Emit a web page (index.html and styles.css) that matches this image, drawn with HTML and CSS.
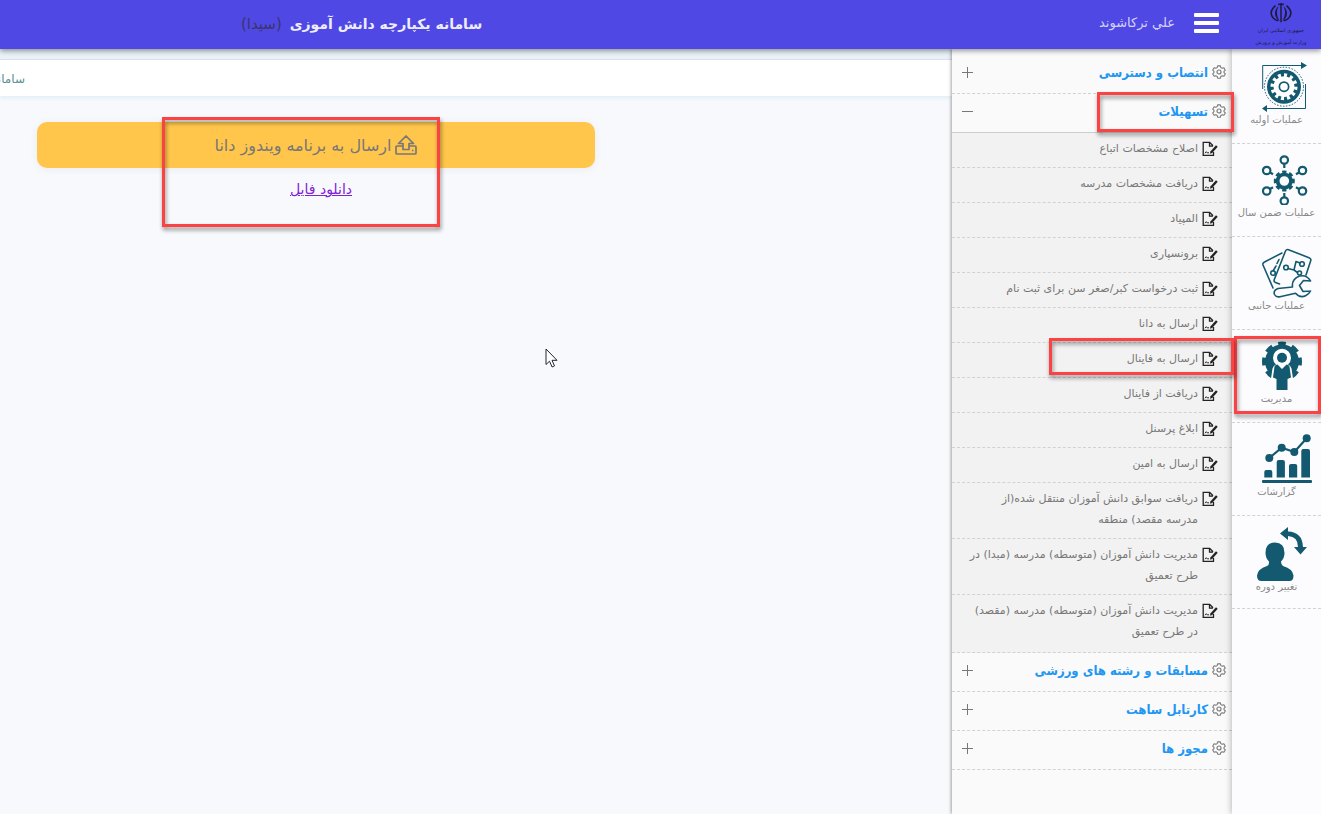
FILE: index.html
```html
<!DOCTYPE html>
<html lang="fa" dir="rtl">

<head>
    <meta charset="UTF-8">
    <meta name="viewport" content="width=device-width, initial-scale=1.0">
    <title>سامانه یکپارچه دانش آموزی</title>
    <link rel="stylesheet" href="styles.css">
</head>

<body>

    <svg class="sprite" aria-hidden="true">
        <symbol id="gear" viewBox="0 0 16 16">
            <path d="M6.4 1h3.2l.5 2 1.5.8 2-.6 1.6 2.7-1.5 1.5v1.3l1.5 1.5-1.6 2.7-2-.6-1.5.8-.5 2H6.4l-.5-2-1.5-.8-2 .6L.8 10.200l1.500-1.500V7.400L.8 5.900l1.600-2.700 2 .6 1.500-.8z" fill="none" stroke="currentColor" stroke-width="1.200" stroke-linejoin="round" />
            <circle cx="8" cy="8" r="2.300" fill="none" stroke="currentColor" stroke-width="1.300" />
        </symbol>
        <symbol id="edit" viewBox="0 0 16 16">
            <path d="M11.500 11V14.300H1.200V1.300h6.500l3.300 3.500M7.500 1.500v3.600H11" fill="none" stroke="currentColor" stroke-width="1.300" />
            <path d="M14 4.200l1.700 1.500-5.500 6.200-2.300.9.700-2.500z" fill="currentColor" />
            <path d="M3 12.200l1.300-1.500 1.200 1.300 1.500-.3" fill="none" stroke="currentColor" />
        </symbol>
    </svg>

    <header class="topbar">
        <div class="emblem">
            <svg viewBox="0 0 24 24" width="24" height="22" aria-hidden="true">
                <path d="M12 3v19M9 2q1.500 1.500 3 0q1.500 1.500 3 0" fill="none" stroke="currentColor" stroke-width="1.600" />
                <path d="M9.500 4.500Q5 12 10.500 21Q3.500 16 6 9Q7 6 9.500 4.500zM14.500 4.500Q19 12 13.500 21Q20.500 16 18 9Q17 6 14.500 4.500z" fill="currentColor" />
                <path d="M6 4Q-2 11 3.500 17.500Q6 20 9 20.500M18 4Q26 11 20.500 17.500Q18 20 15 20.500" fill="none" stroke="currentColor" stroke-width="1.700" />
            </svg>
            <span>جمهوری اسلامی ایران</span>
            <span>وزارت آموزش و پرورش</span>
        </div>
        <button class="menu-toggle" type="button" aria-label="منو"><i></i><i></i><i></i></button>
        <span class="user">علي ترکاشوند</span>
        <h1 class="title">سامانه یکپارچه دانش آموزی <small>(سیدا)</small></h1>
    </header>

    <div class="layout">

        <nav class="rail">
            <a href="#">
                <svg viewBox="0 0 50 50" aria-hidden="true">
                    <path d="M.7 27V3.500H40M43.500 22v24.500H5" fill="none" stroke="currentColor" />
                    <path d="M39 0l6 3.500-6 3.500zM5 43v7l-5-3.500z" fill="currentColor" />
                    <circle cx="22" cy="24.700" r="19.500" fill="none" stroke="currentColor" stroke-dasharray="1.500 1.500" />
                    <circle cx="22" cy="24.700" r="17" fill="currentColor" />
                    <circle cx="22" cy="24.700" r="8" fill="none" stroke="#fff" stroke-width="5" />
                    <circle cx="22" cy="24.700" r="11.500" fill="none" stroke="#fff" stroke-width="4" pathLength="24" stroke-dasharray="1 1" />
                    <circle cx="22" cy="24.700" r="3.800" fill="#fff" />
                </svg>
                <span>عملیات اولیه</span>
            </a>
            <a href="#">
                <svg viewBox="0 0 50 50" aria-hidden="true">
                    <g fill="none" stroke="currentColor">
                        <circle cx="22.300" cy="26" r="6.700" stroke-width="3.800" />
                        <circle cx="22.300" cy="26" r="9" stroke-width="3" pathLength="16" stroke-dasharray="1.200 .8" stroke-dashoffset=".6" />
                        <g stroke-width="2.200">
                            <circle cx="22.300" cy="5" r="3.700" />
                            <circle cx="40.500" cy="15.500" r="3.700" />
                            <circle cx="40.500" cy="36" r="3.700" />
                            <circle cx="22.300" cy="46" r="3.700" />
                            <circle cx="4.700" cy="36" r="3.700" />
                            <circle cx="4.700" cy="15.500" r="3.700" />
                            <path d="M22.300 9v4M37 17.500l-3 1.800M37 34l-3-1.800M22.300 42v-4M8 34l3-1.800M8 17.500l3 1.800" />
                        </g>
                    </g>
                </svg>
                <span>عملیات ضمن سال</span>
            </a>
            <a href="#">
                <svg viewBox="0 0 50 50" aria-hidden="true">
                    <g fill="none" stroke="currentColor" stroke-width="1.600" stroke-linecap="round" stroke-linejoin="round">
                        <path d="M11 40L1 17q-.6-2 1.500-3L20 5M17.500 36l-4-1.500q-2-1-1.200-3L23.500 3q1-2 3-1.300l20.500 8q2.500 1 1.700 3L44 27" />
                        <path d="M26 20.500l6 1.500 2-8.500 4 1.500M32 22l3.500 2.500M11 23l3-5M17 11.500l-2 4" />
                        <circle cx="24" cy="19.500" r="2.300" />
                        <circle cx="40" cy="16" r="2.300" />
                        <circle cx="37.500" cy="25" r="2" />
                        <circle cx="11" cy="25" r="2.300" />
                        <path d="M48.500 33l-7-.5-4 5 3.500 6 7.500-.5M48.500 33Q45 26.500 37.500 28Q29.500 31 30.500 39L16 40.500Q11 42.500 12.500 46.500q1.500 3 5.500 2.200l15.500-3.500Q38 50.500 44 47.500q3-1.500 4.500-4.500" />
                    </g>
                </svg>
                <span>عملیات جانبی</span>
            </a>
            <a href="#">
                <svg viewBox="0 0 50 50" aria-hidden="true">
                    <circle cx="20" cy="20.500" r="17" fill="currentColor" />
                    <circle cx="20" cy="20.500" r="17" fill="none" stroke="currentColor" stroke-width="6" pathLength="16" stroke-dasharray="1.100 .9" stroke-dashoffset=".55" />
                    <path d="M8.500 41l2-13.500q1-3 3.500-4a9 9 0 1 1 12 0q2.500 1 3.500 4l2 13.500z" fill="#fff" />
                    <circle cx="20" cy="16.700" r="5" fill="currentColor" />
                    <path d="M12.500 25.500q1-2 3-2L20 28l4.500-4.500q2 0 3 2l1.500 11-3.500 1.500V49h-11V38L11 36.500z" fill="currentColor" />
                </svg>
                <span>مدیریت</span>
                <b class="marker marker-rail"></b>
            </a>
            <a href="#">
                <svg viewBox="0 0 50 50" aria-hidden="true">
                    <g fill="currentColor">
                        <rect y="46" width="50" height="3" rx="1" />
                        <path d="M2.300 43.500V38q0-2 2-2h4q2 0 2 2v5.500zM14.700 43.500V28q0-2 2-2h4.200q2 0 2 2v15.500zM27 43.500V32q0-2 2-2h4.200q2 0 2 2v11.500zM39.300 43.500V17q0-2 2-2h4.700q2 0 2 2v26.500z" />
                        <circle cx="7.300" cy="24" r="4" />
                        <circle cx="19.700" cy="13.700" r="4" />
                        <circle cx="32.300" cy="18" r="4" />
                        <circle cx="44.700" cy="4.200" r="4" />
                    </g>
                    <path d="M7.300 24l12.400-10.300L32.300 18 44.700 4.200" fill="none" stroke="currentColor" stroke-width="2.200" />
                </svg>
                <span>گزارشات</span>
            </a>
            <a href="#" class="period">
                <svg viewBox="0 0 50 54" aria-hidden="true">
                    <g fill="currentColor">
                        <path d="M18 15.500q9.500 0 9.500 10.500 0 5-3.500 8.500 0 3.500 2 4.500 10 3 10.500 9.500 0 5.500-4 5.500h-28Q0 54 0 48.500 .5 42 10 39q2.500-1 2-4.500Q8.500 31 8.500 26q0-10.500 9.500-10.500z" />
                        <path d="M23 6.500L31 0v4.500Q45.500 5 46 20h4l-6.500 7.500L37 20h4Q41 9.500 31 9v4z" />
                    </g>
                </svg>
                <span>تغییر دوره</span>
            </a>
        </nav>

        <aside class="panel">
            <button class="group" type="button">
                <svg aria-hidden="true"><use href="#gear" /></svg>انتصاب و دسترسی<i class="sign plus"></i>
            </button>
            <button class="group" type="button" aria-expanded="true">
                <svg aria-hidden="true"><use href="#gear" /></svg>تسهیلات<i class="sign"></i>
                <b class="marker marker-group"></b>
            </button>
            <ul class="submenu">
                <li><svg aria-hidden="true"><use href="#edit" /></svg><a href="#">اصلاح مشخصات اتباع</a></li>
                <li><svg aria-hidden="true"><use href="#edit" /></svg><a href="#">دریافت مشخصات مدرسه</a></li>
                <li><svg aria-hidden="true"><use href="#edit" /></svg><a href="#">المپیاد</a></li>
                <li><svg aria-hidden="true"><use href="#edit" /></svg><a href="#">برونسپاری</a></li>
                <li><svg aria-hidden="true"><use href="#edit" /></svg><a href="#">ثبت درخواست کبر/صغر سن برای ثبت نام</a></li>
                <li><svg aria-hidden="true"><use href="#edit" /></svg><a href="#">ارسال به دانا</a></li>
                <li><svg aria-hidden="true"><use href="#edit" /></svg><a href="#">ارسال به فاینال</a><b class="marker marker-item"></b></li>
                <li><svg aria-hidden="true"><use href="#edit" /></svg><a href="#">دریافت از فاینال</a></li>
                <li><svg aria-hidden="true"><use href="#edit" /></svg><a href="#">ابلاغ پرسنل</a></li>
                <li><svg aria-hidden="true"><use href="#edit" /></svg><a href="#">ارسال به امین</a></li>
                <li><svg aria-hidden="true"><use href="#edit" /></svg><a href="#">دریافت سوابق دانش آموزان منتقل شده(از<br>مدرسه مقصد) منطقه</a></li>
                <li><svg aria-hidden="true"><use href="#edit" /></svg><a href="#">مدیریت دانش آموزان (متوسطه) مدرسه (مبدا) در<br>طرح تعمیق</a></li>
                <li><svg aria-hidden="true"><use href="#edit" /></svg><a href="#">مدیریت دانش آموزان (متوسطه) مدرسه (مقصد)<br>در طرح تعمیق</a></li>
            </ul>
            <button class="group" type="button">
                <svg aria-hidden="true"><use href="#gear" /></svg>مسابقات و رشته های ورزشی<i class="sign plus"></i>
            </button>
            <button class="group" type="button">
                <svg aria-hidden="true"><use href="#gear" /></svg>کارتابل ساهت<i class="sign plus"></i>
            </button>
            <button class="group" type="button">
                <svg aria-hidden="true"><use href="#gear" /></svg>مجوز ها<i class="sign plus"></i>
            </button>
        </aside>

        <main class="content">
            <div class="breadcrumb"><span>سامانه</span></div>
            <div class="send">
                <button class="send-button" type="button">
                    <svg viewBox="0 0 22 20" width="22" height="20" aria-hidden="true">
                        <path d="M7.500 11H2q-1 0-1 1v6q0 1 1 1h18q1 0 1-1v-6q0-1-1-1h-5.500M8 14.500V8.500H3.500L11 1l7.500 7.500H14v6zM17 15.500h1.500" fill="none" stroke="currentColor" stroke-width="1.700" stroke-linejoin="round" />
                    </svg>
                    ارسال به برنامه ویندوز دانا
                </button>
                <a class="download" href="#">دانلود فایل</a>
                <b class="marker marker-send"></b>
            </div>
            <svg class="cursor" viewBox="0 0 13 20" width="13" height="20" aria-hidden="true">
                <path d="M1 1v15.500l3.500-3.300 2.600 5.800 2.400-1.100-2.500-5.600H12z" fill="#fff" stroke="#223" />
            </svg>
        </main>

    </div>

</body>

</html>
```
FILE: styles.css
```css
* {
    box-sizing: border-box;
}

body {
    margin: 0;
    min-height: 100vh;
    display: flex;
    flex-direction: column;
    overflow-x: hidden;
    font-family: 'DejaVu Sans', sans-serif;
    font-size: 11px;
    color: #777;
    background-color: #f8f9fc;
}

a {
    color: inherit;
    text-decoration: none;
}

button {
    font-family: inherit;
    border: 0;
    cursor: pointer;
}

.sprite {
    display: none;
}

/* Top bar */
.topbar {
    position: relative;
    z-index: 3;
    display: flex;
    align-items: center;
    height: 49px;
    background-color: #4f48e5;
    box-shadow: 0 2px 5px rgba(0, 0, 0, 0.4);
}

.emblem {
    display: flex;
    flex-direction: column;
    align-items: center;
    width: 80px;
    height: 49px;
    padding-top: 2px;
    font-size: 5px;
    line-height: 12px;
    white-space: nowrap;
    color: #1c1a3c;
}

.menu-toggle {
    display: flex;
    flex-direction: column;
    gap: 4px;
    width: 25px;
    margin: 0 22px 4px 0;
    padding: 0;
    background: none;
}

.menu-toggle i {
    width: 100%;
    height: 4px;
    border-radius: 1px;
    background-color: #fff;
}

.user {
    margin-right: 19px;
    padding-bottom: 4px;
    font-size: 13px;
    color: #d3d2f3;
}

.title {
    width: 36.5%;
    margin: 0 auto 0 0;
    padding-bottom: 2px;
    font-size: 14px;
    color: #eeedfc;
}

.title small {
    margin-right: 3px;
    font-size: 15px;
    font-weight: normal;
    color: #3a3568;
}

.layout {
    position: relative;
    z-index: 0;
    flex: 1;
    display: flex;
}

/* Icon rail */
.rail {
    position: relative;
    z-index: 2;
    flex: none;
    width: 89px;
    padding-top: 2px;
    background-color: #fcfcfe;
    box-shadow: -1px 0 6px rgba(0, 0, 0, 0.25);
}

.rail a {
    position: relative;
    display: block;
    height: 93px;
    padding-top: 11px;
    border-bottom: 1px dashed #d2d2d6;
    font-size: 10px;
    line-height: 16px;
    text-align: center;
    color: #888;
}

.rail svg {
    display: block;
    width: 50px;
    height: 50px;
    margin-right: 9px;
    color: #13596f;
}

.rail span {
    display: block;
}

.rail .period svg {
    height: 54px;
    margin-right: 14px;
}

.rail .period span {
    line-height: 12px;
}

/* Menu panel */
.panel {
    position: relative;
    flex: none;
    width: 280px;
    padding-top: 6px;
    background-color: #fafafa;
    box-shadow: -1px 0 3px rgba(0, 0, 0, 0.35);
}

.group {
    position: relative;
    display: flex;
    align-items: center;
    width: 100%;
    height: 39px;
    padding: 0 6px 4px 10px;
    border-bottom: 1px dashed #d2d2d2;
    font-family: 'DejaVu Sans Condensed', 'DejaVu Sans', sans-serif;
    font-size: 13px;
    font-weight: bold;
    color: #2196f3;
    background: none;
}

.group[aria-expanded="true"] {
    border-bottom: 1px solid #ccc;
}

.group svg {
    width: 14px;
    height: 14px;
    margin-left: 4px;
    color: #777;
}

.sign {
    width: 11px;
    height: 11px;
    margin-right: auto;
    background: linear-gradient(#777, #777) center / 11px 1px no-repeat;
}

.sign.plus {
    background: linear-gradient(#777, #777) center / 11px 1px no-repeat, linear-gradient(#777, #777) center / 1px 11px no-repeat;
}

.submenu {
    margin: 0;
    padding: 0 0 2px;
    list-style: none;
    background-color: #f2f2f2;
    border-bottom: 1px dashed #d2d2d2;
}

.submenu li {
    position: relative;
    display: flex;
    align-items: flex-start;
    gap: 4px;
    padding: 5px 14px 8px 0;
    border-bottom: 1px dashed #d2d2d2;
    line-height: 21px;
    white-space: nowrap;
}

.submenu li:last-child {
    border-bottom: 0;
}

.submenu svg {
    flex: none;
    width: 16px;
    height: 16px;
    margin-top: 3px;
    color: #222;
}

/* Content */
.content {
    position: relative;
    z-index: -1;
    flex: 1;
    min-width: 0;
    padding-top: 10px;
    background: linear-gradient(#e9f2f7, #e9f2f7) top / 100% 12px no-repeat;
}

.breadcrumb {
    display: flex;
    justify-content: flex-end;
    height: 37px;
    border-top: 1px solid #dde0ea;
    font-size: 12px;
    line-height: 38px;
    color: #5b8f92;
    background-color: #fff;
    box-shadow: 0 2px 4px #e0eef5;
}

.breadcrumb span {
    width: 25px;
    overflow: hidden;
    white-space: nowrap;
}

.send {
    position: relative;
    display: flex;
    flex-direction: column;
    align-items: center;
    gap: 13px;
    width: 62.5%;
    margin-right: auto;
    padding: 26px 0 0 37px;
}

.send-button {
    display: flex;
    align-items: center;
    justify-content: center;
    gap: 4px;
    width: 100%;
    height: 46px;
    border-radius: 10px;
    font-size: 16px;
    color: #777;
    background-color: #ffc64b;
    box-shadow: 0 1px 8px rgba(0, 0, 0, 0.06);
}

.download {
    padding-left: 10px;
    font-size: 14px;
    text-decoration: underline;
    color: #8220d8;
}

.cursor {
    position: absolute;
    left: 545px;
    top: 299px;
}

/* Red highlight frames */
.marker {
    position: absolute;
    z-index: 4;
    border: 3px solid #fc4343;
    filter: drop-shadow(1px 3px 2px rgba(0, 0, 0, 0.45));
    pointer-events: none;
}

.marker-rail {
    top: 6px;
    right: 0;
    width: 87px;
    height: 78px;
}

.marker-group {
    top: -2px;
    right: -2px;
    width: 137px;
    height: 40px;
}

.marker-item {
    top: -5px;
    right: -2px;
    width: 185px;
    height: 37px;
}

.marker-send {
    top: 21px;
    left: 162px;
    width: 278px;
    height: 110px;
}
```
